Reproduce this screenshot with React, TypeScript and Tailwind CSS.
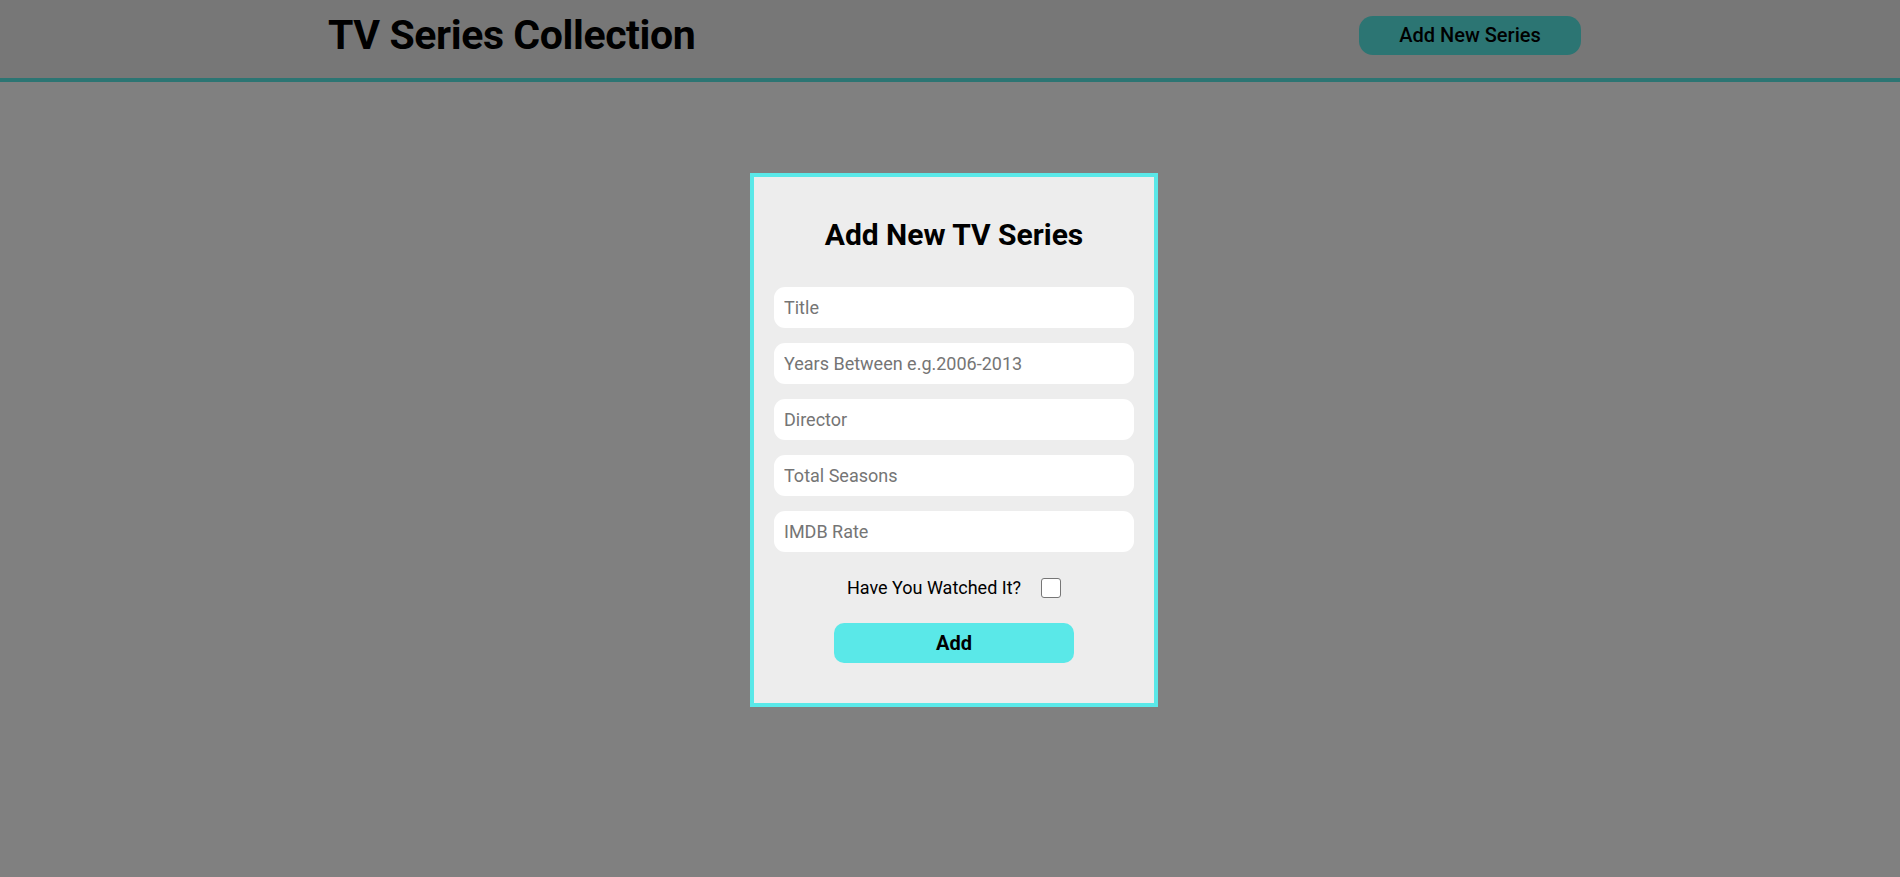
import React from 'react';

const fields = ['Title', 'Years Between e.g.2006-2013', 'Director', 'Total Seasons', 'IMDB Rate'];

const App: React.FC = () => {
  return (
    <div className="min-h-[877px] bg-[#808080] font-['Roboto',sans-serif] text-black">
      {/* Header */}
      <header className="h-[82px] bg-[#777777] border-b-4 border-[#2c7573] flex items-center justify-between pl-[328px] pr-[319px]">
        <h1 className="text-[41px] font-bold leading-none tracking-[-0.4px] pb-[7px]">TV Series Collection</h1>
        <button className="w-[222px] h-[39px] rounded-[14px] bg-[#2c7573] text-[20px] font-medium mt-[-8px]">
          Add New Series
        </button>
      </header>

      {/* Modal */}
      <div className="flex justify-center pt-[91px] pl-[8px]">
        <div className="w-[408px] border-4 border-[#5ae8e8] bg-[#ededed] px-[20px] pt-[40px] pb-[40px]">
          <h2 className="text-center text-[30px] leading-[36px] font-bold">Add New TV Series</h2>
          <div className="mt-[34px] flex flex-col gap-[15px]">
            {fields.map((f) => (
              <input
                key={f}
                placeholder={f}
                className="h-[41px] w-full rounded-[11px] bg-white px-[10px] text-[18px] placeholder:text-[#757575] outline-none"
              />
            ))}
          </div>
          <div className="mt-[24px] h-[24px] flex items-center justify-center gap-[20px]">
            <span className="text-[18px] leading-[24px]">Have You Watched It?</span>
            <input
              type="checkbox"
              className="appearance-none w-[20px] h-[20px] rounded-[3px] border border-[#767676] bg-white"
            />
          </div>
          <div className="mt-[23px] flex justify-center">
            <button className="w-[240px] h-[40px] rounded-[10px] bg-[#5ae8e8] text-[20px] font-bold">Add</button>
          </div>
        </div>
      </div>
    </div>
  );
};

export default App;
